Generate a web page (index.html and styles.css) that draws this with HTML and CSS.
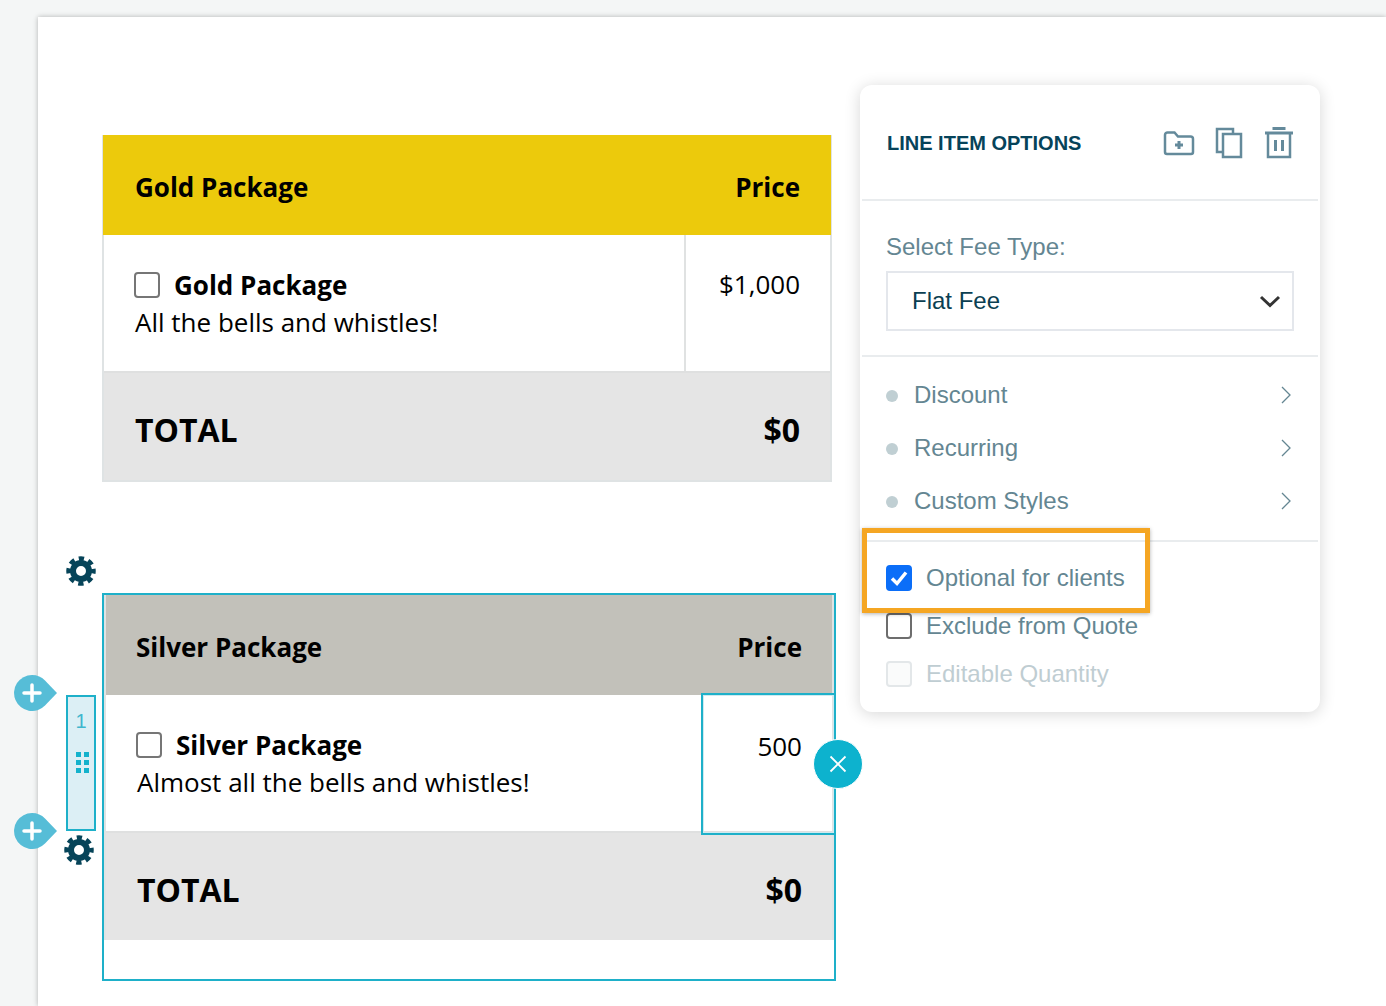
FILE: index.html
```html
<!DOCTYPE html>
<html lang="en">
<head>
<meta charset="utf-8">
<title>Line item options</title>
<link rel="stylesheet" href="styles.css">
</head>
<body>
<main class="page">
  <section class="table table--gold">
    <div class="head head--gold"><span>Gold Package</span><span>Price</span></div>
    <div class="row">
      <div class="desc">
        <div class="name"><span class="box"></span><strong>Gold Package</strong></div>
        <div>All the bells and whistles!</div>
      </div>
      <div class="amount">$1,000</div>
    </div>
    <div class="total"><span>TOTAL</span><span>$0</span></div>
  </section>

  <div class="selected">
    <section class="table">
      <div class="head head--silver"><span>Silver Package</span><span>Price</span></div>
      <div class="row">
        <div class="desc">
          <div class="name"><span class="box"></span><strong>Silver Package</strong></div>
          <div>Almost all the bells and whistles!</div>
        </div>
        <div class="amount amount--bare">500</div>
      </div>
      <div class="total"><span>TOTAL</span><span>$0</span></div>
    </section>

    <div class="active-cell"></div>
    <button class="close" type="button" aria-label="Close">
      <svg viewBox="0 0 18 18" width="18" height="18"><path d="M1.5 1.5l15 15M16.5 1.5l-15 15"/></svg>
    </button>

    <svg class="gear gear--top" viewBox="0 0 30 30"><use href="#cog"/></svg>
    <svg class="gear gear--bottom" viewBox="0 0 30 30"><use href="#cog"/></svg>

    <div class="add add--top"><svg viewBox="0 0 44 36" width="44" height="36"><path class="add-drop" d="M18 0a18 18 0 0 1 13 5.500L43 18 31 30.500A18 18 0 1 1 18 0z"/><path class="add-plus" d="M18 10v16M10 18h16"/></svg></div>
    <div class="add add--bottom"><svg viewBox="0 0 44 36" width="44" height="36"><path class="add-drop" d="M18 0a18 18 0 0 1 13 5.500L43 18 31 30.500A18 18 0 1 1 18 0z"/><path class="add-plus" d="M18 10v16M10 18h16"/></svg></div>

    <div class="handle">
      <span class="handle-num">1</span>
      <span class="dots"><i></i><i></i><i></i><i></i><i></i><i></i></span>
    </div>
  </div>
</main>

<aside class="panel">
  <header class="panel-head">
    <h2>LINE ITEM OPTIONS</h2>
    <div class="tools">
      <svg width="32" height="26" viewBox="0 0 32 26"><path d="M2 5a2.500 2.500 0 0 1 2.500-2.500h7l3.500 4h12.500A2.500 2.500 0 0 1 30 9v13a2 2 0 0 1-2 2H4a2 2 0 0 1-2-2z"/><path class="thick" d="M16 11v8M12 15h8"/></svg>
      <svg width="28" height="32" viewBox="0 0 28 32"><path d="M7 25H2V2h16v5"/><path d="M8 7h18v23H8z"/></svg>
      <svg width="31" height="32" viewBox="0 0 31 32"><path class="thick" d="M2 6h28M11 3V1.500h10V3"/><path d="M5 7v23h22V7"/><path class="thick" d="M12.500 13v11M19.500 13v11"/></svg>
    </div>
  </header>

  <div class="fee">
    <label class="fee-label">Select Fee Type:</label>
    <div class="select">
      <span>Flat Fee</span>
      <svg width="22" height="13" viewBox="0 0 22 13"><path d="M2 2l9 8.500L20 2"/></svg>
    </div>
  </div>

  <ul class="options">
    <li><i class="bullet"></i><span>Discount</span><svg width="12" height="18" viewBox="0 0 12 18"><path d="M2 1l8 8-8 8"/></svg></li>
    <li><i class="bullet"></i><span>Recurring</span><svg width="12" height="18" viewBox="0 0 12 18"><path d="M2 1l8 8-8 8"/></svg></li>
    <li><i class="bullet"></i><span>Custom Styles</span><svg width="12" height="18" viewBox="0 0 12 18"><path d="M2 1l8 8-8 8"/></svg></li>
  </ul>

  <div class="checks">
    <div class="check">
      <span class="cbox cbox--on"><svg width="20" height="18" viewBox="0 0 20 18"><path d="M3 9.500l5 5L17 3.500"/></svg></span>
      <span>Optional for clients</span>
    </div>
    <div class="check"><span class="cbox"></span><span>Exclude from Quote</span></div>
    <div class="check check--off"><span class="cbox"></span><span>Editable Quantity</span></div>
  </div>

  <div class="highlight"></div>
</aside>

<svg class="defs" width="0" height="0">
  <symbol id="cog" viewBox="0 0 30 30">
    <circle class="cog-ring" cx="15" cy="15" r="8"/>
    <circle class="cog-teeth" cx="15" cy="15" r="12.500"/>
  </symbol>
</svg>
</body>
</html>
```
FILE: styles.css
```css
* { box-sizing: border-box; }
html, body { height: 100%; }
body {
  margin: 0;
  background: #f4f6f6;
  overflow: hidden;
  position: relative;
  font-family: "Open Sans", sans-serif;
  color: #000;
}
.page {
  margin: 17px 0 0 38px;
  height: 989px;
  background: #fff;
  padding: 118px 0 0 64px;
  box-shadow: 0 0 5px rgba(0, 0, 0, .28);
}

/* pricing tables */
.table {
  width: 730px;
  height: 347px;
  display: flex;
  flex-direction: column;
  font-size: 26px;
  line-height: 38px;
  border: solid #dfe3e4;
  border-width: 0 2px 2px;
}
.head {
  height: 100px;
  flex: none;
  display: flex;
  justify-content: space-between;
  align-items: center;
  padding: 3px 30px 0 30px;
  font-weight: 700;
}
.head--gold { background: #ecca0c; margin: 0 -1px; padding-left: 32px; padding-right: 31px; }
.head--silver { background: #c2c1ba; }
.row {
  height: 138px;
  flex: none;
  display: flex;
  border-bottom: 2px solid #dfe0e0;
}
.desc { flex: 1; padding: 30px 0 0 31px; }
.name { display: flex; align-items: center; margin: 1px 0 -1px; }
.name strong { font-weight: 700; }
.box {
  width: 26px;
  height: 26px;
  margin: 0 14px 0 -1px;
  border: 2px solid #767676;
  border-radius: 4px;
  background: #fff;
}
.amount {
  width: 146px;
  flex: none;
  padding: 30px 30px 0 0;
  text-align: right;
  border-left: 2px solid #e0e2e2;
}
.amount--bare { border-left-color: transparent; padding-top: 32px; }
.total {
  flex: 1;
  background: #e5e5e5;
  display: flex;
  justify-content: space-between;
  align-items: center;
  padding: 6px 30px 0 31px;
  font-size: 32px;
  font-weight: 700;
}

/* selected table and its controls */
.selected {
  position: relative;
  width: 734px;
  height: 388px;
  margin-top: 111px;
  border: 2px solid #1eb0c9;
  padding-bottom: 37px;
}
.selected .table { border-bottom: 0; height: 345px; }
.active-cell {
  position: absolute;
  left: 597px;
  top: 98px;
  width: 135px;
  height: 142px;
  border: 2px solid #1eb0c9;
  box-shadow: inset 0 0 0 1px #cfeaf0;
}
.close {
  position: absolute;
  left: 709px;
  top: 144px;
  width: 50px;
  height: 50px;
  padding: 0;
  border: 1px solid #fff;
  border-radius: 50%;
  background: #0db2ce;
  display: flex;
  align-items: center;
  justify-content: center;
}
.close svg { fill: none; stroke: #fff; stroke-width: 1.800; }
.gear { position: absolute; width: 30px; height: 30px; }
.gear--top { left: -38px; top: -39px; }
.gear--bottom { left: -40px; top: 240px; }
.cog-ring { fill: none; stroke: #064459; stroke-width: 6; }
.cog-teeth {
  fill: none;
  stroke: #064459;
  stroke-width: 4.500;
  stroke-dasharray: 5.300 4.520;
  stroke-dashoffset: 2.650;
}
.add { position: absolute; line-height: 0; }
.add--top { left: -90px; top: 80px; }
.add--bottom { left: -90px; top: 218px; }
.add-drop { fill: #56bdd7; }
.add-plus { fill: none; stroke: #fff; stroke-width: 3.500; stroke-linecap: round; }
.handle {
  position: absolute;
  left: -38px;
  top: 100px;
  width: 30px;
  height: 136px;
  border: 2px solid #1eb0c9;
  background: #dceff5;
  display: flex;
  flex-direction: column;
  align-items: center;
}
.handle-num {
  margin-top: 11px;
  font: 20px/26px "Liberation Sans", sans-serif;
  color: #3fb6cd;
}
.dots {
  margin-top: 18px;
  display: grid;
  grid-template-columns: 5px 5px;
  grid-auto-rows: 5px;
  gap: 3px;
  transform: translateX(1px);
}
.dots i { background: #14b2cc; }

/* options panel */
.panel {
  position: absolute;
  left: 860px;
  top: 85px;
  width: 460px;
  height: 627px;
  background: #fff;
  border-radius: 12px;
  box-shadow: 0 2px 16px rgba(0, 0, 0, .16);
  font-family: "Liberation Sans", sans-serif;
  font-size: 24px;
  color: #648692;
  padding: 0 2px;
}
.panel-head {
  height: 116px;
  border-bottom: 2px solid #e9ecee;
  display: flex;
  justify-content: space-between;
  align-items: center;
  padding: 0 24px 0 25px;
}
.panel-head h2 {
  margin: 0;
  position: relative;
  top: 1px;
  font-size: 20px;
  font-weight: 700;
  color: #06435a;
}
.tools { display: flex; align-items: center; gap: 20px; position: relative; top: 1px; }
.tools svg { fill: none; stroke: #648a9b; stroke-width: 2.500; }
.tools .thick { stroke-width: 3; }
.fee {
  height: 156px;
  border-bottom: 2px solid #e9ecee;
  padding: 32px 24px 0;
}
.fee-label { display: block; line-height: 28px; }
.select {
  margin-top: 10px;
  height: 60px;
  border: 2px solid #e4e7ec;
  display: flex;
  align-items: center;
  justify-content: space-between;
  padding: 0 11px 0 24px;
  color: #0b3f52;
}
.select svg { fill: none; stroke: #333; stroke-width: 3; }
.options {
  list-style: none;
  margin: 0;
  height: 185px;
  padding: 12px 26px 0 24px;
  border-bottom: 2px solid #e9ecee;
}
.options li { height: 53px; display: flex; align-items: center; }
.options span { flex: 1; margin-top: -2px; }
.bullet {
  width: 12px;
  height: 12px;
  margin-right: 16px;
  border-radius: 50%;
  background: #c0cfd3;
}
.options svg { margin-top: -2px; fill: none; stroke: #648692; stroke-width: 1.300; }
.checks { padding: 12px 24px 0; }
.check { height: 48px; display: flex; align-items: center; gap: 14px; }
.cbox {
  width: 26px;
  height: 26px;
  flex: none;
  border: 2px solid #6d6d6d;
  border-radius: 4px;
  background: #fff;
  display: flex;
  align-items: center;
  justify-content: center;
}
.cbox--on { background: #0b6ef8; border-color: #0b6ef8; }
.cbox svg { fill: none; stroke: #fff; stroke-width: 3.500; }
.check--off { color: #bfcdd2; }
.check--off .cbox { border-color: #e3e7e9; background: #fafbfb; }
.highlight {
  position: absolute;
  left: 2px;
  top: 443px;
  width: 288px;
  height: 85px;
  border: 5px solid #f5a623;
  box-shadow: 0 1px 4px rgba(0, 0, 0, .3);
}
.defs { position: absolute; }
```
